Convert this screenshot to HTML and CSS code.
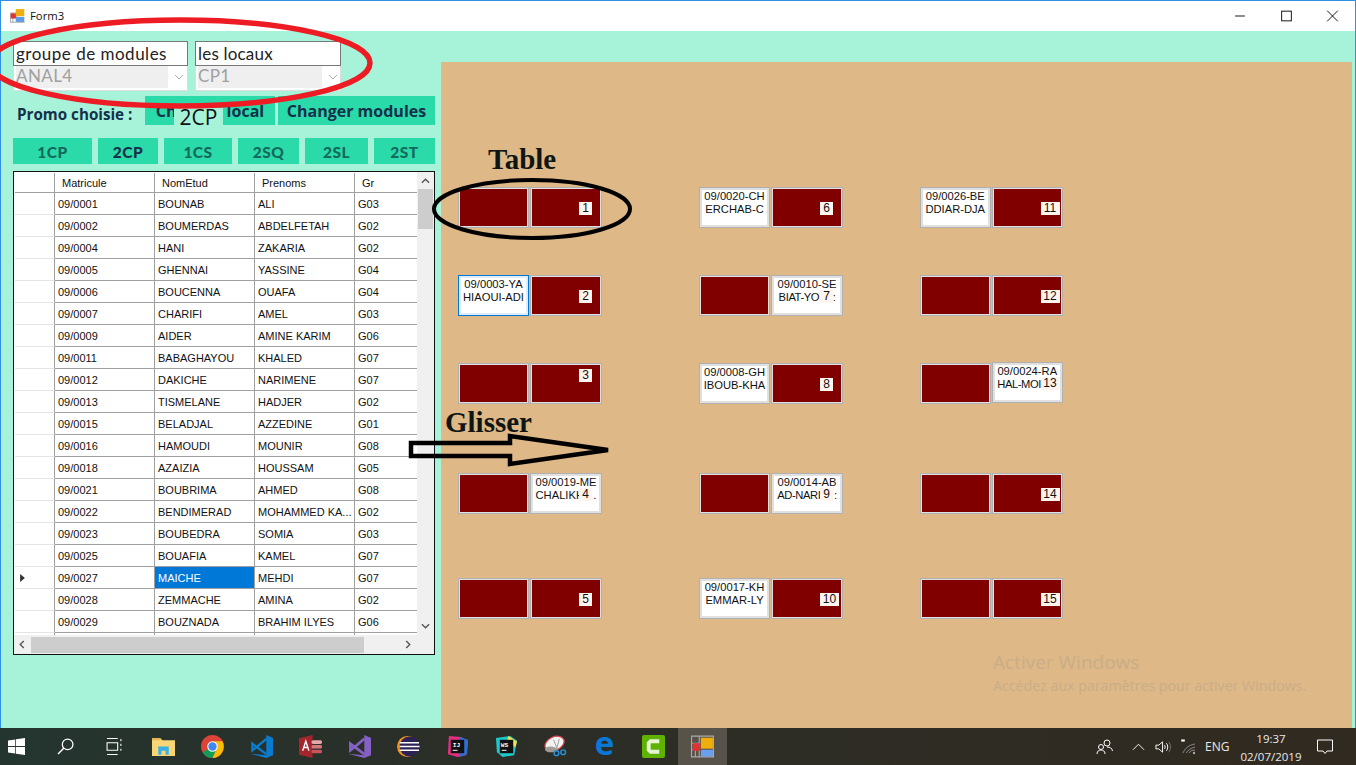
FILE: index.html
```html
<!DOCTYPE html>
<html lang="fr">
<head>
<meta charset="utf-8">
<title>Form3</title>
<link rel="stylesheet" href="styles.css">
</head>
<body>
<div class="window">
  <header class="titlebar">
    <svg class="app-icon" viewBox="0 0 21 20"><path d="M.5 6.500h8M.5 13.500h8M4 13.500v6M.5 6.500v13h20" fill="none" stroke="#aaa" stroke-width="1.500"/><rect x="1" y="7" width="8" height="7" fill="#d33"/><rect x="8" y="1" width="12" height="10" fill="#f0ae0e"/><rect x="8" y="12" width="12" height="7" fill="#5b9be8"/></svg>
    <span class="title">Form3</span>
    <div class="controls">
      <svg viewBox="0 0 46 31"><path d="M18 15.500h10" stroke="#111"/></svg>
      <svg viewBox="0 0 46 31"><rect x="18.500" y="10.500" width="10" height="10" fill="none" stroke="#111"/></svg>
      <svg viewBox="0 0 46 31"><path d="M18 10l11 11M29 10l-11 11" stroke="#111"/></svg>
    </div>
  </header>
  <main class="client">
    <section class="left">
      <div class="fields">
        <div class="field field-a"><div class="field-label">groupe de modules</div><div class="combo"><span class="combo-value">ANAL4</span><svg class="chev" viewBox="0 0 10 6"><path d="M1 1l4 4 4-4" fill="none" stroke="#aaa"/></svg></div></div>
        <div class="field field-b"><div class="field-label">les locaux</div><div class="combo"><span class="combo-value">CP1</span><svg class="chev" viewBox="0 0 10 6"><path d="M1 1l4 4 4-4" fill="none" stroke="#aaa"/></svg></div></div>
      </div>
      <div class="promo-row">
        <span class="promo-label">Promo choisie :</span>
        <div class="action change-local">Changer local<span class="promo-value">2CP</span></div>
        <div class="action change-mod">Changer modules</div>
      </div>
      <div class="tabs">
        <div class="tab t1">1CP</div><div class="tab t2 on">2CP</div><div class="tab t3">1CS</div><div class="tab t4">2SQ</div><div class="tab t5">2SL</div><div class="tab t6">2ST</div>
      </div>
      <div class="grid-box">
        <div class="grid-main">
          <div class="grid-cols">
            <div class="row head"><div class="c c0"></div><div class="c c1">Matricule</div><div class="c c2">NomEtud</div><div class="c c3">Prenoms</div><div class="c c4">Gr</div></div>
            <div class="row"><div class="c c0"></div><div class="c c1">09/0001</div><div class="c c2">BOUNAB</div><div class="c c3">ALI</div><div class="c c4">G03</div></div>
            <div class="row"><div class="c c0"></div><div class="c c1">09/0002</div><div class="c c2">BOUMERDAS</div><div class="c c3">ABDELFETAH</div><div class="c c4">G02</div></div>
            <div class="row"><div class="c c0"></div><div class="c c1">09/0004</div><div class="c c2">HANI</div><div class="c c3">ZAKARIA</div><div class="c c4">G02</div></div>
            <div class="row"><div class="c c0"></div><div class="c c1">09/0005</div><div class="c c2">GHENNAI</div><div class="c c3">YASSINE</div><div class="c c4">G04</div></div>
            <div class="row"><div class="c c0"></div><div class="c c1">09/0006</div><div class="c c2">BOUCENNA</div><div class="c c3">OUAFA</div><div class="c c4">G04</div></div>
            <div class="row"><div class="c c0"></div><div class="c c1">09/0007</div><div class="c c2">CHARIFI</div><div class="c c3">AMEL</div><div class="c c4">G03</div></div>
            <div class="row"><div class="c c0"></div><div class="c c1">09/0009</div><div class="c c2">AIDER</div><div class="c c3">AMINE KARIM</div><div class="c c4">G06</div></div>
            <div class="row"><div class="c c0"></div><div class="c c1">09/0011</div><div class="c c2">BABAGHAYOU</div><div class="c c3">KHALED</div><div class="c c4">G07</div></div>
            <div class="row"><div class="c c0"></div><div class="c c1">09/0012</div><div class="c c2">DAKICHE</div><div class="c c3">NARIMENE</div><div class="c c4">G07</div></div>
            <div class="row"><div class="c c0"></div><div class="c c1">09/0013</div><div class="c c2">TISMELANE</div><div class="c c3">HADJER</div><div class="c c4">G02</div></div>
            <div class="row"><div class="c c0"></div><div class="c c1">09/0015</div><div class="c c2">BELADJAL</div><div class="c c3">AZZEDINE</div><div class="c c4">G01</div></div>
            <div class="row"><div class="c c0"></div><div class="c c1">09/0016</div><div class="c c2">HAMOUDI</div><div class="c c3">MOUNIR</div><div class="c c4">G08</div></div>
            <div class="row"><div class="c c0"></div><div class="c c1">09/0018</div><div class="c c2">AZAIZIA</div><div class="c c3">HOUSSAM</div><div class="c c4">G05</div></div>
            <div class="row"><div class="c c0"></div><div class="c c1">09/0021</div><div class="c c2">BOUBRIMA</div><div class="c c3">AHMED</div><div class="c c4">G08</div></div>
            <div class="row"><div class="c c0"></div><div class="c c1">09/0022</div><div class="c c2">BENDIMERAD</div><div class="c c3">MOHAMMED KA...</div><div class="c c4">G02</div></div>
            <div class="row"><div class="c c0"></div><div class="c c1">09/0023</div><div class="c c2">BOUBEDRA</div><div class="c c3">SOMIA</div><div class="c c4">G03</div></div>
            <div class="row"><div class="c c0"></div><div class="c c1">09/0025</div><div class="c c2">BOUAFIA</div><div class="c c3">KAMEL</div><div class="c c4">G07</div></div>
            <div class="row"><div class="c c0 marker"><svg viewBox="0 0 6 10"><path d="M0 0l6 5-6 5z" fill="#333"/></svg></div><div class="c c1">09/0027</div><div class="c c2 selected">MAICHE</div><div class="c c3">MEHDI</div><div class="c c4">G07</div></div>
            <div class="row"><div class="c c0"></div><div class="c c1">09/0028</div><div class="c c2">ZEMMACHE</div><div class="c c3">AMINA</div><div class="c c4">G02</div></div>
            <div class="row"><div class="c c0"></div><div class="c c1">09/0029</div><div class="c c2">BOUZNADA</div><div class="c c3">BRAHIM ILYES</div><div class="c c4">G06</div></div>
            <div class="row"><div class="c c0"></div><div class="c c1"></div><div class="c c2"></div><div class="c c3"></div><div class="c c4"></div></div>
          </div>
          <div class="vscroll">
            <svg viewBox="0 0 10 6"><path d="M1 5l4-4 4 4" fill="none" stroke="#555" stroke-width="1.500"/></svg>
            <div class="vthumb"></div>
            <div class="spacer"></div>
            <svg viewBox="0 0 10 6"><path d="M1 1l4 4 4-4" fill="none" stroke="#555" stroke-width="1.500"/></svg>
          </div>
        </div>
        <div class="hscroll">
          <svg viewBox="0 0 6 10"><path d="M5 1L1 5l4 4" fill="none" stroke="#555" stroke-width="1.500"/></svg>
          <div class="hthumb"></div>
          <div class="spacer"></div>
          <svg viewBox="0 0 6 10"><path d="M1 1l4 4-4 4" fill="none" stroke="#555" stroke-width="1.500"/></svg>
        </div>
      </div>
    </section>
    <section class="room">
      <div class="desks">
        <div class="desk"><div class="seat"></div><div class="seat"><span class="num mid">1</span></div></div>
        <div class="desk"><div class="seat free"><span class="who">09/0020-CH<br>ERCHAB-C</span></div><div class="seat"><span class="num mid">6</span></div></div>
        <div class="desk"><div class="seat free"><span class="who">09/0026-BE<br>DDIAR-DJA</span></div><div class="seat"><span class="num mid wide">11</span></div></div>

        <div class="desk"><div class="seat free focus"><span class="who">09/0003-YA<br>HIAOUI-ADI</span></div><div class="seat"><span class="num mid">2</span></div></div>
        <div class="desk"><div class="seat"></div><div class="seat free"><span class="who">09/0010-SE<br><span class="tight">BIAT-YO&nbsp;&nbsp;&nbsp;&nbsp;&nbsp;:</span></span><span class="num mid">7</span></div></div>
        <div class="desk"><div class="seat"></div><div class="seat"><span class="num mid wide">12</span></div></div>

        <div class="desk"><div class="seat"></div><div class="seat"><span class="num top">3</span></div></div>
        <div class="desk"><div class="seat free"><span class="who">09/0008-GH<br>IBOUB-KHA</span></div><div class="seat"><span class="num mid">8</span></div></div>
        <div class="desk"><div class="seat"></div><div class="seat free up"><span class="who">09/0024-RA<br><span class="tight">HAL-MOI&nbsp;&nbsp;&nbsp;&nbsp;&nbsp;&nbsp;</span></span><span class="num mid wide">13</span></div></div>

        <div class="desk"><div class="seat"></div><div class="seat free"><span class="who">09/0019-ME<br>CHALIKH&nbsp;&nbsp;&nbsp;.</span><span class="num mid">4</span></div></div>
        <div class="desk"><div class="seat"></div><div class="seat free"><span class="who">09/0014-AB<br><span class="tight">AD-NARI&nbsp;&nbsp;&nbsp;&nbsp;&nbsp;:</span></span><span class="num mid">9</span></div></div>
        <div class="desk"><div class="seat"></div><div class="seat"><span class="num mid wide">14</span></div></div>

        <div class="desk"><div class="seat"></div><div class="seat"><span class="num mid">5</span></div></div>
        <div class="desk"><div class="seat free"><span class="who">09/0017-KH<br>EMMAR-LY</span></div><div class="seat"><span class="num mid wide">10</span></div></div>
        <div class="desk"><div class="seat"></div><div class="seat"><span class="num mid wide">15</span></div></div>
      </div>
      <div class="activate">
        <div class="act-1">Activer Windows</div>
        <div class="act-2">Accédez aux paramètres pour activer Windows.</div>
      </div>
    </section>
  </main>
  <footer class="taskbar">
    <div class="tb-icons">
      <div class="tb"><svg viewBox="0 0 16 16"><path d="M0 2.300l6.800-1v6.300H0zM7.500 1.200L16 0v7.600H7.500zM0 8.400h6.800v6.300L0 13.700zM7.500 8.400H16V16l-8.500-1.200z" fill="#fff"/></svg></div>
      <div class="tb"><svg viewBox="0 0 16 16"><circle cx="10" cy="6" r="5" fill="none" stroke="#fff" stroke-width="1.200"/><path d="M6.500 9.500L1 15" stroke="#fff" stroke-width="1.400"/></svg></div>
      <div class="tb"><svg viewBox="0 0 16 16"><path d="M1 .5h10M1 15.500h10M1 4.500h10v7H1zM14 1v2M14 5.500v2M14 10v2" fill="none" stroke="#fff"/></svg></div>
      <div class="tb big"><svg viewBox="0 0 22 18"><path d="M0 1h8l2 2h12v15H0z" fill="#f8d675"/><path d="M0 1h8v2H0z" fill="#e5b94e"/><path d="M6 17V9h10v8h-3v-4H9v4z" fill="#38b0e8"/></svg></div>
      <div class="tb big"><svg viewBox="0 0 22 22"><circle cx="11" cy="11" r="11" fill="#db4437"/><path d="M11 11L1.500 16.500A11 11 0 0 0 11 22l5-11z" fill="#0f9d58"/><path d="M11 6h9.500A11 11 0 0 1 11 22l5-11z" fill="#fbbc05"/><circle cx="11" cy="11" r="5" fill="#fff"/><circle cx="11" cy="11" r="4" fill="#4285f4"/></svg></div>
      <div class="tb big"><svg viewBox="0 0 24 24"><path d="M17 0l7 3v18l-7 3L0 19.500 17 21V3z" fill="#0a7ccf"/><path d="M17 4L7 12.500 2.500 9v7L7 12.500 17 20" fill="none" stroke="#0a7ccf" stroke-width="2.400"/></svg></div>
      <div class="tb big"><svg viewBox="0 0 22 22"><path d="M13 0v22L0 19V3z" fill="#a4262c"/><rect x="12" y="5" width="10" height="3.500" rx="1.500" fill="#e4a8ab"/><rect x="12" y="9.500" width="10" height="3.500" rx="1.500" fill="#d3797e"/><rect x="12" y="14" width="10" height="3.500" rx="1.500" fill="#c8555a"/><path d="M3.500 15L6.500 6l3 9M4.500 12h4" fill="none" stroke="#fff" stroke-width="1.300"/></svg></div>
      <div class="tb big"><svg viewBox="0 0 24 24"><path d="M17 0l7 3v18l-7 3L0 19.500 17 21V3z" fill="#8661c5"/><path d="M17 4L7 12.500 2.500 9v7L7 12.500 17 20" fill="none" stroke="#8661c5" stroke-width="2.800"/></svg></div>
      <div class="tb big"><svg viewBox="0 0 24 24"><circle cx="11" cy="12" r="11" fill="#f7941e"/><circle cx="13" cy="12" r="10.500" fill="#2c2255"/><path d="M3 8h20M2.500 12h21M3 16h20" stroke="#fff" stroke-width="1.600"/></svg></div>
      <div class="tb big"><svg viewBox="0 0 24 24"><path d="M3 1l13 1 7 5-2 14-9 2-10-3z" fill="#e0317f"/><path d="M14 2l9 3-1 15-8 3z" fill="#2f6fd0"/><rect x="5" y="5" width="14" height="14" fill="#111"/><text class="jb" x="7" y="13">IJ</text><path d="M7 16h5" stroke="#fff"/></svg></div>
      <div class="tb big"><svg viewBox="0 0 24 24"><path d="M1 3l15-2 7 5-3 15-12 2-6-5z" fill="#1ec8c8"/><path d="M14 1l9 6-2 6-8-8z" fill="#f6e14b"/><rect x="5" y="5" width="14" height="14" fill="#111"/><text class="jb" x="6" y="13">WS</text><path d="M7 16h5" stroke="#fff"/></svg></div>
      <div class="tb big"><svg viewBox="0 0 24 24"><ellipse cx="11" cy="9" rx="10.500" ry="7" fill="#f3f3f3" stroke="#d9424a" stroke-width="1.300" transform="rotate(-25 11 9)"/><ellipse cx="7" cy="15" rx="6" ry="3" fill="#a39b92"/><path d="M10 5l4 10M16 4l-3 11" stroke="#999"/><circle cx="13" cy="19" r="2.500" fill="none" stroke="#2d8fd8" stroke-width="1.500"/><circle cx="20" cy="18" r="2.500" fill="none" stroke="#2d8fd8" stroke-width="1.500"/></svg></div>
      <div class="tb big"><span class="edge">e</span></div>
      <div class="tb big"><svg viewBox="0 0 24 24"><rect width="24" height="24" rx="2" fill="#5fb200"/><path d="M18 6.500H9l-2 2v7l2 2h9" fill="none" stroke="#e7f4d6" stroke-width="4"/></svg></div>
      <div class="tb big active"><svg viewBox="0 0 21 20"><path d="M.5.500h20v19H.5zM.5 7h7M.5 13h7M4 13v6.500M7.500.500v19" fill="none" stroke="#aaa"/><rect x="1.500" y="7" width="7" height="7" fill="#d33"/><rect x="9" y="2" width="11" height="10" fill="#f0ae0e"/><rect x="9" y="13" width="11" height="6" fill="#6a9ff0"/></svg></div>
    </div>
    <div class="tray">
      <svg class="t-people" viewBox="0 0 18 16"><circle cx="11" cy="4" r="3" fill="none" stroke="#fff"/><circle cx="5" cy="8" r="2.500" fill="none" stroke="#fff"/><path d="M1 15c0-3 2-4 4-4s4 1 4 4M11 8c3 0 5 1 5.500 4" fill="none" stroke="#fff"/></svg>
      <svg class="t-chev" viewBox="0 0 14 8"><path d="M1 7l6-6 6 6" fill="none" stroke="#fff"/></svg>
      <svg class="t-vol" viewBox="0 0 18 14"><path d="M1 5h3l4-3.500v11L4 9H1zM10 5c1 1 1 3 0 4M12 3c2 2 2 6 0 8" fill="none" stroke="#fff"/><path d="M14.500 1.500c2.500 3 2.500 8 0 11" fill="none" stroke="#777"/></svg>
      <svg class="t-wifi" viewBox="0 0 16 16"><path d="M1 1.500h4M3 0v3M1.500.500l3 2M4.500.500l-3 2" stroke="#fff" stroke-width=".8"/><path d="M3 14C5 9 9 6 15 5M6 14c2-3 5-5 9-6M9 14c1-2 3-3 6-3" fill="none" stroke="#888"/><circle cx="14" cy="14" r="1.200" fill="#aaa"/></svg>
      <span class="t-lang">ENG</span>
      <div class="t-clock"><span>19:37</span><span>02/07/2019</span></div>
      <svg class="t-note" viewBox="0 0 16 16"><path d="M.5 1h15v11H10l-2 2.500L6 12H.5z" fill="none" stroke="#fff"/></svg>
    </div>
  </footer>
</div>

<div class="overlay-text ann-table">Table</div>
<div class="overlay-text ann-glisser">Glisser</div>
<svg class="annotations" viewBox="0 0 1356 765">
  <ellipse class="ring-red" cx="180" cy="63" rx="190" ry="43"/>
  <ellipse class="ring-black" cx="532" cy="209" rx="98" ry="29"/>
  <path class="arrow" d="M411 443H510V436L608 450 510 464V456H411Z"/>
</svg>
</body>
</html>
```
FILE: styles.css
```css
* { box-sizing: border-box; }
html, body { margin: 0; padding: 0; }
body { width: 1356px; height: 765px; overflow: hidden; position: relative; font-family: "Liberation Sans", Arial, sans-serif; background: #a6f3d9; }
.window { width: 1356px; height: 765px; display: flex; flex-direction: column; }

.titlebar { height: 31px; flex: none; background: #fff; display: flex; align-items: center; padding-left: 9px; border: 1px solid #2f8fe0; border-bottom: none; }
.app-icon { width: 15px; height: 15px; margin-right: 5px; margin-top: -1px; }
.title { font: 11.300px "Open Sans", sans-serif; color: #111; margin-top: -1px; }
.controls { margin-left: auto; display: flex; }
.controls svg { width: 46px; height: 30px; display: block; }

.client { flex: 1; min-height: 0; display: flex; background: #a6f3d9; border-left: 1px solid #2f8fe0; border-right: 1px solid #2f8fe0; }
.left { width: 440px; flex: none; padding: 10px 0 0 12px; display: flex; flex-direction: column; }

.fields { display: flex; gap: 7px; height: 55px; }
.field { display: flex; flex-direction: column; }
.field-a { width: 175px; }
.field-b { width: 146px; }
.field-label { height: 25px; background: #fff; border: 1px solid #777; font: 17px/24px "Lato", sans-serif; color: #222; letter-spacing: .5px; padding-left: 2px; }
.field-b .field-label { letter-spacing: .2px; }
.combo { height: 25px; background: #fff; border: 1px solid #ddd; border-top: none; padding: 0 2px 2px; display: flex; align-items: flex-start; }
.combo-value { width: 152px; height: 22px; background: #efefef; font: 17px/20px "Lato", sans-serif; color: #a0a0a0; letter-spacing: .4px; }
.field-b .combo-value { width: 124px; }
.chev { width: 10px; height: 6px; margin: 8px 0 0 6px; }

.promo-row { display: flex; align-items: flex-start; height: 29px; }
.promo-label { width: 132px; padding-left: 4px; font: 700 15.200px/37px "Open Sans", sans-serif; color: #14304a; white-space: nowrap; }
.action { height: 29px; background: #2adba9; font: 700 16px/30px "Open Sans", sans-serif; color: #14304a; text-align: center; white-space: nowrap; position: relative; }
.change-local { width: 130px; }
.change-mod { width: 157px; margin-left: 3px; }
.promo-value { position: absolute; left: 29px; top: 12px; width: 49px; height: 17px; background: #a6f3d9; font: 400 21px/19px "Open Sans", sans-serif; color: #111; }

.tabs { display: flex; height: 26px; margin-top: 13px; }
.tab { height: 26px; background: #2adba9; font: 900 15.500px/28px "Lato", sans-serif; color: #126a5d; text-align: center; letter-spacing: .5px; }
.tab.on { color: #14304a; }
.t1 { width: 79px; margin-right: 6px; }
.t2 { width: 60px; margin-right: 6px; }
.t3 { width: 68px; margin-right: 6px; }
.t4 { width: 61px; margin-right: 6px; }
.t5 { width: 63px; margin-right: 6px; }
.t6 { width: 61px; }

.grid-box { width: 422px; height: 484px; margin-top: 7px; border: 1px solid #111; background: #f0f0f0; display: flex; flex-direction: column; }
.grid-main { height: 463px; display: flex; overflow: hidden; }
.grid-cols { width: 403px; flex: none; overflow: hidden; background: #fff; padding-top: 1px; }
.row { display: flex; height: 22px; font-size: 11px; line-height: 23px; color: #111; }
.row.head { height: 20px; line-height: 21px; }
.c { height: 100%; border-right: 1px solid #a0a0a0; border-bottom: 1px solid #a0a0a0; padding-left: 3px; white-space: nowrap; overflow: hidden; flex: none; }
.c0 { width: 40px; margin-left: 1px; border-bottom-color: #e4e4e4; position: relative; }
.c1, .c2, .c3 { width: 100px; }
.c4 { width: 62px; border-right: none; }
.head .c { padding-left: 7px; }
.head .c0 { border-bottom-color: #a0a0a0; }
.marker svg { position: absolute; left: 5px; top: 7px; width: 5px; height: 8px; }
.selected { background: #0078d7; color: #fff; }

.vscroll { width: 17px; flex: none; background: #f0f0f0; display: flex; flex-direction: column; align-items: center; padding: 6px 0; }
.vscroll > svg { width: 9px; height: 6px; flex: none; }
.vthumb { width: 15px; height: 40px; margin-top: 5px; background: #cdcdcd; }
.spacer { flex: 1; }
.hscroll { flex: 1; display: flex; align-items: center; padding: 0 23px 0 5px; }
.hscroll > svg { width: 6px; height: 9px; flex: none; }
.hthumb { width: 333px; height: 16px; margin-left: 6px; background: #cdcdcd; }

.room { width: 911px; flex: none; margin-top: 31px; background: #deb887; position: relative; padding: 125px 0 0 17px; }
.desks { display: grid; grid-template-columns: 241px 221px 143px; grid-template-rows: 88px 88px 110px 105px 41px; }
.desk { display: flex; height: 41px; }
.seat { width: 71px; height: 41px; background: #800000; border: 1px solid #b0b0b0; box-shadow: inset 0 0 0 1px #e0e0e0; padding: 2px 3px; position: relative; font-size: 11.200px; line-height: 13px; color: #111; }
.seat + .seat { width: 72px; margin-left: 1px; }
.seat.free { background: #fff; box-shadow: inset 0 0 0 2px #e0e0e0; }
.seat.focus { border-color: #0078d7; box-shadow: inset 0 0 0 2px #e0ecf8; }
.seat.up { margin-top: -1px; }
.who { display: block; text-align: center; white-space: nowrap; overflow: hidden; height: 28px; }
.tight { letter-spacing: -.4px; }
.num { position: absolute; background: #fff5ee; width: 13px; height: 13px; line-height: 13px; font-size: 12px; text-align: center; left: 48px; color: #111; }
.num.mid { top: 14px; }
.num.top { top: 5px; }
.num.wide { width: 19px; }

.activate { position: absolute; left: 552px; top: 588px; color: #c9ad88; }
.act-1 { font: 19px/24px "Open Sans", sans-serif; }
.act-2 { font: 14.200px/24px "Open Sans", sans-serif; white-space: nowrap; }

.taskbar { height: 37px; flex: none; display: flex; justify-content: space-between; background: linear-gradient(90deg, #24352f 0%, #2b2e27 35%, #312a20 100%); color: #fff; }
.tb-icons { display: flex; margin-left: -8px; }
.tb { width: 49px; height: 37px; display: flex; align-items: center; justify-content: center; flex: none; }
.tb svg { width: 17px; height: 17px; display: block; }
.tb.big svg { width: 23px; height: 23px; }
.tb.active { background: #57524a; }
.edge { font: 700 33px/33px "Open Sans", sans-serif; color: #0a78d7; margin-top: -8px; }
.jb { font: 700 6.500px "Liberation Mono", monospace; fill: #fff; }
.tray { display: flex; align-items: center; width: 296px; height: 37px; padding-left: 36px; }
.t-people { width: 18px; height: 16px; margin-right: 18px; }
.t-chev { width: 13px; height: 8px; margin-right: 10px; }
.t-vol { width: 17px; height: 14px; margin-right: 8px; }
.t-wifi { width: 16px; height: 16px; margin-right: 9px; }
.t-lang { font: 12px "Open Sans", sans-serif; color: #e8e8e8; width: 34px; }
.t-clock { display: flex; flex-direction: column; align-items: center; width: 72px; margin-left: -4px; padding-top: 2px; font: 11.500px/18px "Open Sans", sans-serif; color: #e8e8e8; }
.t-note { width: 16px; height: 16px; margin-left: 10px; }

.overlay-text { position: absolute; font-family: "Liberation Serif", serif; font-weight: 700; font-size: 29px; line-height: 32px; color: #0f1512; }
.ann-table { left: 488px; top: 143px; }
.ann-glisser { left: 445px; top: 406px; }
.annotations { position: absolute; left: 0; top: 0; width: 1356px; height: 765px; pointer-events: none; }
.ring-red { fill: none; stroke: #ed1c24; stroke-width: 5.500; }
.ring-black { fill: none; stroke: #000; stroke-width: 4; }
.arrow { fill: none; stroke: #000; stroke-width: 4.500; }
```
